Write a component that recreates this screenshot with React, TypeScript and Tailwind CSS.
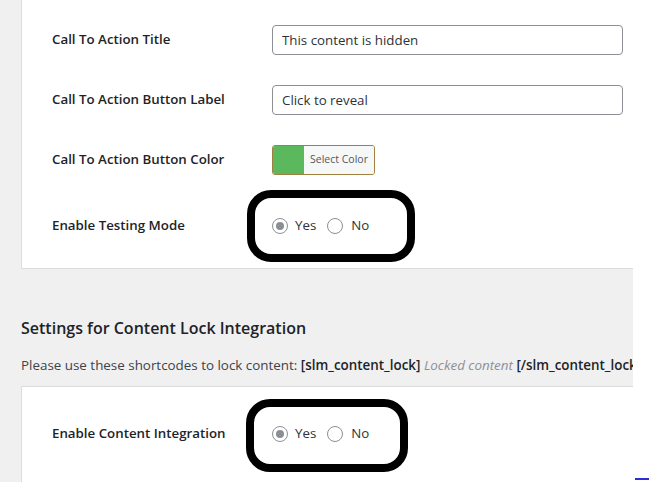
import React from 'react';

const Radio = ({ checked }: { checked?: boolean }) => (
  <span className="flex h-4 w-4 shrink-0 items-center justify-center rounded-full border border-[#8c8f94] bg-white">
    {checked && <span className="h-2 w-2 rounded-full bg-[#8a8f96]" />}
  </span>
);

const YesNo = () => (
  <div className="flex items-center text-[13.3px] text-[#2c3338]">
    <Radio checked />
    <span className="ml-[7px]">Yes</span>
    <span className="ml-[11px]">
      <Radio />
    </span>
    <span className="ml-[8px]">No</span>
  </div>
);

const Row = ({ label, h, children }: { label: string; h: string; children: React.ReactNode }) => (
  <div className={`flex items-center ${h}`}>
    <div className="w-[250px] shrink-0 pl-[30px] text-[13.3px] font-semibold text-[#1d2327]">{label}</div>
    {children}
  </div>
);

const App = () => {
  return (
    <div className="relative flex h-[482px] w-[649px] overflow-hidden bg-white font-['Open_Sans',sans-serif]">
      {/* main admin area */}
      <div className="w-[633px] shrink-0 overflow-hidden bg-[#f0f0f1] pl-[21px]">
        {/* first settings card */}
        <div className="h-[269px] w-[640px] border-b border-l border-[#dcdcde] bg-white pt-[10px]">
          <Row label="Call To Action Title" h="h-[60px]">
            <input
              readOnly
              value="This content is hidden"
              className="h-[30px] w-[351px] rounded-[4px] border border-[#8c8f94] px-[9px] text-[13.3px] text-[#2c3338] outline-none"
            />
          </Row>
          <Row label="Call To Action Button Label" h="h-[60px]">
            <input
              readOnly
              value="Click to reveal"
              className="h-[30px] w-[351px] rounded-[4px] border border-[#8c8f94] px-[9px] text-[13.3px] text-[#2c3338] outline-none"
            />
          </Row>
          <Row label="Call To Action Button Color" h="h-[60px]">
            <div className="flex h-[30px] w-[103px] overflow-hidden rounded-[3px] border border-[#a07f3f]">
              <span className="w-[31px] bg-[#5cb85c]" />
              <span className="flex flex-1 items-center justify-center bg-[#f6f7f7] text-[10.5px] text-[#50575e]">
                Select Color
              </span>
            </div>
          </Row>
          <Row label="Enable Testing Mode" h="h-[72px]">
            <YesNo />
          </Row>
        </div>

        {/* content lock section */}
        <h2 className="mt-[47px] h-[24px] text-[16px] font-semibold leading-[24px] text-[#1d2327]">
          Settings for Content Lock Integration
        </h2>
        <p className="mt-[15px] whitespace-nowrap text-[13.4px] leading-[20px] text-[#3c434a]">
          Please use these shortcodes to lock content: <b className="font-semibold text-[#1d2327]">[slm_content_lock]</b>{' '}
          <i className="text-[#8c8f94]">Locked content</i>{' '}
          <b className="font-semibold text-[#1d2327]">[/slm_content_lock]</b>
        </p>

        <div className="mt-[11px] h-[120px] w-[640px] border-l border-t border-[#dcdcde] bg-white pt-[17px]">
          <Row label="Enable Content Integration" h="h-[60px]">
            <YesNo />
          </Row>
        </div>
      </div>

      {/* right edge */}
      <div className="relative flex-1 bg-white">
        <span className="absolute bottom-[2px] left-[2px] h-[2px] w-[14px] bg-[#2d2dd6]" />
      </div>

      {/* annotation outlines */}
      <div className="absolute left-[247px] top-[190px] h-[72px] w-[168px] rounded-[24px] border-[8px] border-black" />
      <div className="absolute left-[246px] top-[399px] h-[73px] w-[162px] rounded-[24px] border-[8px] border-black" />
    </div>
  );
};

export default App;
